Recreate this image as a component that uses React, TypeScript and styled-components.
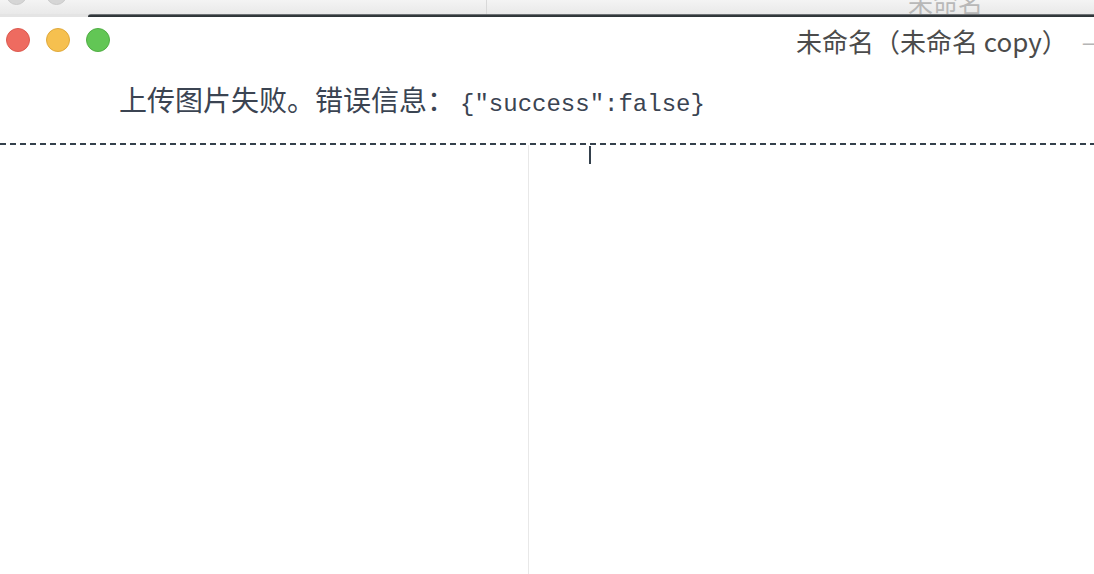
import React from 'react';
import styled, { createGlobalStyle } from 'styled-components';

const GlobalStyle = createGlobalStyle`
    html, body {
        margin: 0;
        padding: 0;
        background: #ffffff;
        overflow: hidden;
    }
    * {
        box-sizing: border-box;
    }
`;

const CJK = `"Noto Sans CJK SC", "Noto Sans", sans-serif`;

const Screen = styled.div`
    width: 1094px;
    height: 574px;
    display: flex;
    flex-direction: column;
    overflow: hidden;
    background: #ffffff;
    font-family: ${CJK};
`;

/* window lying behind, only its bottom edge shows */
const BackBar = styled.div`
    height: 14px;
    display: flex;
    align-items: flex-end;
    background: linear-gradient(#f4f4f4, #e9e9e9);
    overflow: hidden;
`;

const BackLights = styled.div`
    display: flex;
    gap: 19px;
    padding-left: 6px;
    margin-bottom: 9px;
`;

const BackLight = styled.span`
    width: 21px;
    height: 21px;
    border-radius: 50%;
    background: #d6d6d6;
    border: 1px solid #cacaca;
`;

const BackDivider = styled.span`
    align-self: stretch;
    width: 1px;
    margin-left: 419px;
    background: #d9d9d9;
`;

const BackTitle = styled.span`
    margin-left: 421px;
    margin-bottom: 4px;
    font-size: 25px;
    line-height: 16px;
    color: #b8b8b8;
    white-space: nowrap;
`;

const EdgeRow = styled.div`
    height: 3px;
    display: flex;
    background: #e4e4e4;
`;

const Edge = styled.div`
    flex: 1;
    margin-left: 88px;
    border-top-left-radius: 3px;
    background: linear-gradient(#8a8e91, #33393d 50%, #2c3236);
`;

const TitleBar = styled.div`
    height: 46px;
    display: flex;
    align-items: center;
    white-space: nowrap;
`;

const Lights = styled.div`
    display: flex;
    gap: 16px;
    padding-left: 6px;
`;

const Light = styled.span<{ $color: string; $edge: string }>`
    width: 24px;
    height: 24px;
    border-radius: 50%;
    background: ${(p) => p.$color};
    border: 1px solid ${(p) => p.$edge};
`;

const Title = styled.span`
    margin-left: 686px;
    font-size: 26px;
    color: #4b4b4b;
`;

const Edited = styled.span`
    margin-left: 14px;
    font-size: 24px;
    color: #b5b5b5;
`;

const Message = styled.div`
    height: 80px;
    padding: 16px 0 0 119px;
    display: flex;
    align-items: baseline;
    color: #3b4452;
    white-space: nowrap;
`;

const MessageText = styled.span`
    font-size: 28px;
`;

const Code = styled.code`
    margin-left: 5px;
    font-family: "Liberation Mono", "DejaVu Sans Mono", monospace;
    font-size: 24px;
    color: #3b4452;
`;

const Dashed = styled.div`
    height: 2px;
    background: repeating-linear-gradient(to right, #34404c 0 6px, transparent 6px 10px);
`;

const Split = styled.div`
    flex: 1;
    display: grid;
    grid-template-columns: 529px 1fr;
`;

const Pane = styled.div`
    border-right: 1px solid #e8e8e8;
`;

const Editor = styled.div`
    padding: 1px 0 0 60px;
`;

const Caret = styled.div`
    width: 2px;
    height: 18px;
    background: #34404c;
`;

export default function App() {
    return (
        <Screen>
            <GlobalStyle />
            <BackBar>
                <BackLights>
                    <BackLight />
                    <BackLight />
                </BackLights>
                <BackDivider />
                <BackTitle>未命名</BackTitle>
            </BackBar>
            <EdgeRow>
                <Edge />
            </EdgeRow>
            <TitleBar>
                <Lights>
                    <Light $color="#ee6b60" $edge="#dc5a4f" />
                    <Light $color="#f6c04f" $edge="#e0a93b" />
                    <Light $color="#62c655" $edge="#50ae44" />
                </Lights>
                <Title>未命名（未命名 copy）</Title>
                <Edited>—</Edited>
            </TitleBar>
            <Message>
                <MessageText>上传图片失败。错误信息：</MessageText>
                <Code>{'{"success":false}'}</Code>
            </Message>
            <Dashed />
            <Split>
                <Pane />
                <Editor>
                    <Caret />
                </Editor>
            </Split>
        </Screen>
    );
}
